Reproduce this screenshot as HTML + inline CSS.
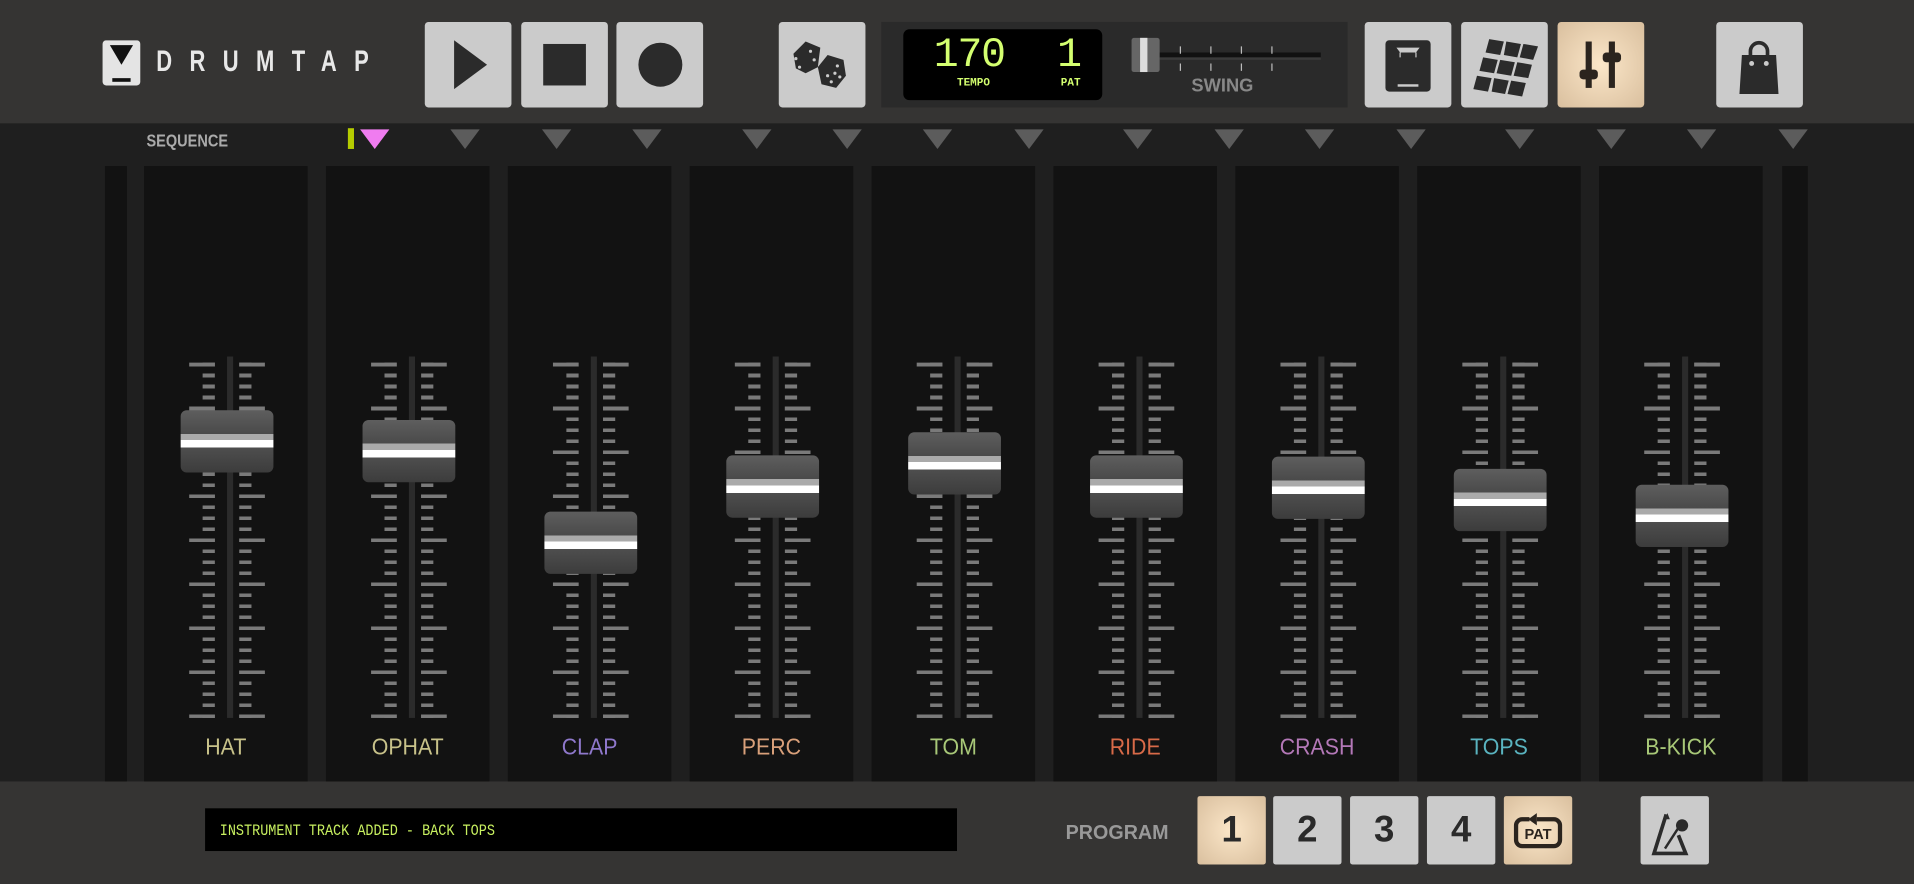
<!DOCTYPE html>
<html><head><meta charset="utf-8"><style>
html,body{margin:0;padding:0;width:1914px;height:884px;overflow:hidden;background:#222}
#w{position:absolute;left:0;top:0;width:1568px;height:724px;transform:scale(1.22066,1.221);transform-origin:0 0;background:#1f1f1f;font-family:"Liberation Sans",sans-serif}
.a{position:absolute}
.btn{position:absolute;top:18px;width:71px;height:70px;background:#cbcbcb;border-radius:3px}
.btn.beige,.pb.beige{background:radial-gradient(circle at 50% 50%,#fbe6c8,#d9bf9e)}
.tri{position:absolute;top:106px;width:0;height:0;border-left:12px solid transparent;border-right:12px solid transparent;border-top:16px solid #5c5c5c}
.strip{position:absolute;top:136px;width:134px;height:504px;background:#121212}
.tk{position:absolute;top:297px;height:292px}
.ts{background:repeating-linear-gradient(to bottom,#7a7a7a 0 3px,transparent 3px 9px)}
.tl{height:291px;background:repeating-linear-gradient(to bottom,#7a7a7a 0 3px,transparent 3px 36px)}
.trk{position:absolute;top:292px;width:5px;height:296px;background:#2b2b2b}
.cap{position:absolute;width:76px;height:51px;border-radius:5px;background:linear-gradient(#5e5e5e,#4a4a4a 38%,#aaa 38%,#aaa 48%,#fff 48%,#fff 60%,#4e4e4e 60%,#3c3c3c)}
.lab{position:absolute;top:602px;width:134px;text-align:center;font-size:19px;transform:scaleX(0.92)}
.pb{position:absolute;top:652px;width:56px;height:56px;background:#cbcbcb;border-radius:2px;font-size:30px;font-weight:bold;color:#2a2a2a;text-align:center;line-height:56px}
</style></head><body><div id="w">
<div class="a" style="left:0;top:0;width:1568px;height:101px;background:#353433"></div>
<div class="a" style="left:0;top:640px;width:1568px;height:84px;background:#353433"></div>
<svg class="a" style="left:84px;top:33px" width="31" height="37"><rect width="31" height="37" rx="3" fill="#e4e4e4"/><path d="M6 4h19l-9.5 16z" fill="#111"/><rect x="8" y="31" width="15" height="3" fill="#111"/></svg>
<div class="a" style="left:128px;top:37px;font-size:24px;font-weight:bold;letter-spacing:19px;color:#e8e8e8;transform:scaleX(0.75);transform-origin:0 0">DRUMTAP</div>
<div class="btn" style="left:348px"><svg width="71" height="70"><path d="M24 15l27 20-27 20z" fill="#2b2b2b"/></svg></div>
<div class="btn" style="left:427px"><svg width="71" height="70"><rect x="18" y="18" width="35" height="34" fill="#2b2b2b"/></svg></div>
<div class="btn" style="left:505px"><svg width="71" height="70"><circle cx="36" cy="35" r="18" fill="#2b2b2b"/></svg></div>
<div class="btn" style="left:638px"><svg width="71" height="70"><path d="M12 26l10-10 12 5-2 16-10 5-8-4z" fill="#2b2b2b"/><path d="M32 37l8-10 13 4 2 13-8 10-12-3z" fill="#2b2b2b"/><g fill="#cbcbcb"><circle cx="14" cy="30" r="1.3"/><circle cx="17" cy="37" r="1.3"/><circle cx="26" cy="24" r="1.3"/><circle cx="29" cy="31" r="1.3"/><circle cx="40" cy="44" r="1.3"/><circle cx="43" cy="49" r="1.3"/><circle cx="48" cy="36" r="1.3"/><circle cx="50" cy="45" r="1.3"/><circle cx="46" cy="42" r="1.3"/></g></svg></div>
<div class="a" style="left:722px;top:18px;width:382px;height:70px;background:#2a2a2a"></div>
<div class="a" style="left:740px;top:24px;width:163px;height:58px;background:#000;border-radius:5px"></div>
<div class="a" style="left:765px;top:27px;font-family:'Liberation Mono',monospace;font-size:34px;color:#d4ff70;letter-spacing:-1px">170</div>
<div class="a" style="left:866px;top:27px;font-family:'Liberation Mono',monospace;font-size:34px;color:#d4ff70">1</div>
<div class="a" style="left:784px;top:63px;font-family:'Liberation Mono',monospace;font-size:9px;font-weight:bold;color:#d4ff70">TEMPO</div>
<div class="a" style="left:869px;top:63px;font-family:'Liberation Mono',monospace;font-size:9px;font-weight:bold;color:#d4ff70">PAT</div>
<svg class="a" style="left:922px;top:28px" width="170" height="36"><rect x="28" y="15" width="132" height="4" fill="#111"/><rect x="28" y="19" width="132" height="2" fill="#3a3a3a"/><g stroke="#bbb" stroke-width="1"><path d="M45 10v6M70 10v6M95 10v6M120 10v6M45 24v6M70 24v6M95 24v6M120 24v6"/></g><rect x="5" y="3" width="23" height="28" rx="2" fill="#666"/><rect x="12" y="3" width="6" height="28" fill="#ddd"/></svg>
<div class="a" style="left:976px;top:62px;font-size:15px;font-weight:bold;color:#888">SWING</div>
<div class="btn" style="left:1118px"><svg width="71" height="70"><rect x="17" y="15" width="37" height="42" rx="3" fill="#2b2b2b"/><path d="M26 21h19l-3 4h-13z" fill="#cbcbcb"/><path d="M29 25v4M42 25v4" stroke="#cbcbcb" stroke-width="1"/><rect x="27" y="51" width="17" height="2" fill="#cbcbcb"/></svg></div>
<div class="btn" style="left:1197px"><svg width="71" height="70"><g fill="#2b2b2b"><path d="M23 14l12 2-3 11-12-2z"/><path d="M37 16l12 2-3 11-11-2z"/><path d="M51 18l12 2-4 11-11-2z"/><path d="M18 29l12 2-3 11-12-2z"/><path d="M32 31l12 2-3 11-12-2z"/><path d="M46 33l12 2-3 11-12-2z"/><path d="M13 44l12 2-3 11-12-2z"/><path d="M27 46l12 2-3 11-11-2z"/><path d="M41 48l12 2-3 11-12-2z"/></g></svg></div>
<div class="btn beige" style="left:1276px"><svg width="71" height="70"><g fill="#2b241e"><rect x="23" y="16" width="5" height="38"/><rect x="18" y="39" width="15" height="8" rx="3"/><rect x="42" y="16" width="5" height="38"/><rect x="37" y="25" width="15" height="8" rx="3"/></g></svg></div>
<div class="btn" style="left:1406px"><svg width="71" height="70"><path d="M21 27h28l2 32h-32z" fill="#2b2b2b"/><path d="M28 30v-6a7 7 0 0114 0v6" stroke="#2b2b2b" stroke-width="3" fill="none"/><circle cx="29" cy="34" r="2" fill="#cbcbcb"/><circle cx="41" cy="34" r="2" fill="#cbcbcb"/></svg></div>
<div class="a" style="left:120px;top:107px;font-size:14px;font-weight:bold;color:#aaa;transform:scaleX(0.85);transform-origin:0 0">SEQUENCE</div>
<div class="a" style="left:285px;top:105px;width:5px;height:17px;background:#b5cc00"></div>
<div class="tri" style="left:295px;border-top-color:#f07cf0"></div>
<div class="tri" style="left:369px"></div><div class="tri" style="left:444px"></div><div class="tri" style="left:518px"></div><div class="tri" style="left:608px"></div><div class="tri" style="left:682px"></div><div class="tri" style="left:756px"></div><div class="tri" style="left:831px"></div><div class="tri" style="left:920px"></div><div class="tri" style="left:995px"></div><div class="tri" style="left:1069px"></div><div class="tri" style="left:1144px"></div><div class="tri" style="left:1233px"></div><div class="tri" style="left:1308px"></div><div class="tri" style="left:1382px"></div><div class="tri" style="left:1457px"></div>
<div class="a" style="left:86px;top:136px;width:18px;height:504px;background:#121212"></div>
<div class="a" style="left:1460px;top:136px;width:21px;height:504px;background:#121212"></div>
<div class="strip" style="left:118px"></div><div class="strip" style="left:267px"></div><div class="strip" style="left:416px"></div><div class="strip" style="left:565px"></div><div class="strip" style="left:714px"></div><div class="strip" style="left:863px"></div><div class="strip" style="left:1012px"></div><div class="strip" style="left:1161px"></div><div class="strip" style="left:1310px"></div>
<div style="position:absolute;left:118px;top:0"><div class="tk ts" style="left:48px;width:10px"></div><div class="tk tl" style="left:37px;width:21px"></div><div class="tk ts" style="left:78px;width:10px"></div><div class="tk tl" style="left:78px;width:21px"></div><div class="trk" style="left:68px"></div><div class="cap" style="left:30px;top:336px"></div><div class="lab" style="left:0;color:#c8c28a">HAT</div></div>
<div style="position:absolute;left:267px;top:0"><div class="tk ts" style="left:48px;width:10px"></div><div class="tk tl" style="left:37px;width:21px"></div><div class="tk ts" style="left:78px;width:10px"></div><div class="tk tl" style="left:78px;width:21px"></div><div class="trk" style="left:68px"></div><div class="cap" style="left:30px;top:344px"></div><div class="lab" style="left:0;color:#c8c28a">OPHAT</div></div>
<div style="position:absolute;left:416px;top:0"><div class="tk ts" style="left:48px;width:10px"></div><div class="tk tl" style="left:37px;width:21px"></div><div class="tk ts" style="left:78px;width:10px"></div><div class="tk tl" style="left:78px;width:21px"></div><div class="trk" style="left:68px"></div><div class="cap" style="left:30px;top:419px"></div><div class="lab" style="left:0;color:#8f78cc">CLAP</div></div>
<div style="position:absolute;left:565px;top:0"><div class="tk ts" style="left:48px;width:10px"></div><div class="tk tl" style="left:37px;width:21px"></div><div class="tk ts" style="left:78px;width:10px"></div><div class="tk tl" style="left:78px;width:21px"></div><div class="trk" style="left:68px"></div><div class="cap" style="left:30px;top:373px"></div><div class="lab" style="left:0;color:#d9a07a">PERC</div></div>
<div style="position:absolute;left:714px;top:0"><div class="tk ts" style="left:48px;width:10px"></div><div class="tk tl" style="left:37px;width:21px"></div><div class="tk ts" style="left:78px;width:10px"></div><div class="tk tl" style="left:78px;width:21px"></div><div class="trk" style="left:68px"></div><div class="cap" style="left:30px;top:354px"></div><div class="lab" style="left:0;color:#a8c878">TOM</div></div>
<div style="position:absolute;left:863px;top:0"><div class="tk ts" style="left:48px;width:10px"></div><div class="tk tl" style="left:37px;width:21px"></div><div class="tk ts" style="left:78px;width:10px"></div><div class="tk tl" style="left:78px;width:21px"></div><div class="trk" style="left:68px"></div><div class="cap" style="left:30px;top:373px"></div><div class="lab" style="left:0;color:#d86a48">RIDE</div></div>
<div style="position:absolute;left:1012px;top:0"><div class="tk ts" style="left:48px;width:10px"></div><div class="tk tl" style="left:37px;width:21px"></div><div class="tk ts" style="left:78px;width:10px"></div><div class="tk tl" style="left:78px;width:21px"></div><div class="trk" style="left:68px"></div><div class="cap" style="left:30px;top:374px"></div><div class="lab" style="left:0;color:#b478b8">CRASH</div></div>
<div style="position:absolute;left:1161px;top:0"><div class="tk ts" style="left:48px;width:10px"></div><div class="tk tl" style="left:37px;width:21px"></div><div class="tk ts" style="left:78px;width:10px"></div><div class="tk tl" style="left:78px;width:21px"></div><div class="trk" style="left:68px"></div><div class="cap" style="left:30px;top:384px"></div><div class="lab" style="left:0;color:#5ab4c0">TOPS</div></div>
<div style="position:absolute;left:1310px;top:0"><div class="tk ts" style="left:48px;width:10px"></div><div class="tk tl" style="left:37px;width:21px"></div><div class="tk ts" style="left:78px;width:10px"></div><div class="tk tl" style="left:78px;width:21px"></div><div class="trk" style="left:68px"></div><div class="cap" style="left:30px;top:397px"></div><div class="lab" style="left:0;color:#a8c878">B-KICK</div></div>
<div class="a" style="left:168px;top:662px;width:616px;height:35px;background:#000"></div>
<div class="a" style="left:180px;top:673px;font-family:'Liberation Mono',monospace;font-size:13px;color:#c8f060;transform:scaleX(0.85);transform-origin:0 0">INSTRUMENT TRACK ADDED - BACK TOPS</div>
<div class="a" style="left:873px;top:672px;font-size:17px;font-weight:bold;color:#999;transform:scaleX(0.95);transform-origin:0 0">PROGRAM</div>
<div class="pb beige" style="left:981px">1</div>
<div class="pb" style="left:1043px">2</div>
<div class="pb" style="left:1106px">3</div>
<div class="pb" style="left:1169px">4</div>
<div class="pb beige" style="left:1232px"><svg width="56" height="56" style="display:block"><rect x="10" y="19" width="36" height="22" rx="5" fill="none" stroke="#2b241e" stroke-width="3.5"/><rect x="21" y="15" width="6" height="7" fill="#f0dcc0"/><path d="M27 14l-7 5 7 5z" fill="#2b241e"/><text x="28" y="35" text-anchor="middle" font-size="12" font-weight="bold" fill="#2b241e" font-family="Liberation Sans">PAT</text></svg></div>
<div class="pb" style="left:1344px"><svg width="56" height="56" style="display:block"><path d="M21 15l-10 32h26l-6-15" fill="none" stroke="#2b2b2b" stroke-width="3"/><path d="M19 19l3-5 2 5" fill="#2b2b2b"/><path d="M20 43l11-17" stroke="#2b2b2b" stroke-width="2"/><circle cx="34" cy="24" r="5" fill="#2b2b2b"/></svg></div>
</div></body></html>
